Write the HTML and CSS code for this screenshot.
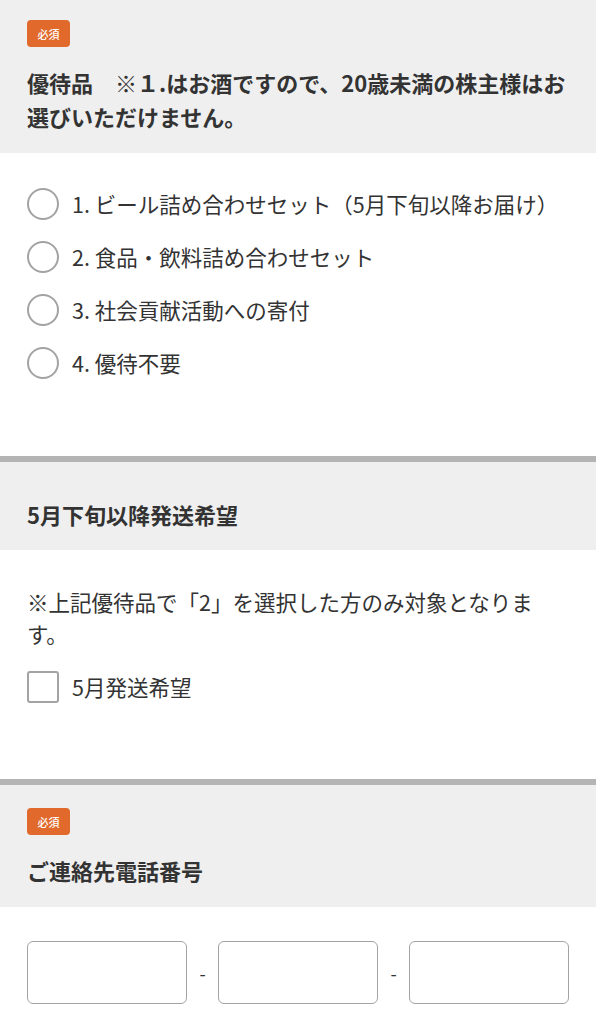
FILE: index.html
```html
<!DOCTYPE html>
<html lang="ja">
<head>
    <meta charset="UTF-8">
    <meta name="viewport" content="width=device-width, initial-scale=1.0">
    <title>株主優待 申込フォーム</title>
    <link rel="stylesheet" href="styles.css">
</head>
<body>
    <form class="form">
        <!-- 優待品 -->
        <section class="field field-first">
            <div class="field-head">
                <span class="badge">必須</span>
                <h2 class="field-title">優待品　※１.はお酒ですので、20歳未満の株主様はお選びいただけません。</h2>
            </div>
            <div class="field-body">
                <ul class="choices">
                    <li><label class="choice"><input type="radio" name="gift" value="1"><span>1. ビール詰め合わせセット（5月下旬以降お届け）</span></label></li>
                    <li><label class="choice"><input type="radio" name="gift" value="2"><span>2. 食品・飲料詰め合わせセット</span></label></li>
                    <li><label class="choice"><input type="radio" name="gift" value="3"><span>3. 社会貢献活動への寄付</span></label></li>
                    <li><label class="choice"><input type="radio" name="gift" value="4"><span>4. 優待不要</span></label></li>
                </ul>
            </div>
        </section>

        <!-- 発送希望 -->
        <section class="field">
            <div class="field-head field-head-plain">
                <h2 class="field-title">5月下旬以降発送希望</h2>
            </div>
            <div class="field-body">
                <p class="note">※上記優待品で「2」を選択した方のみ対象となります。</p>
                <label class="choice choice-check"><input type="checkbox" name="may"><span>5月発送希望</span></label>
            </div>
        </section>

        <!-- 電話番号 -->
        <section class="field">
            <div class="field-head">
                <span class="badge">必須</span>
                <h2 class="field-title">ご連絡先電話番号</h2>
            </div>
            <div class="field-body field-body-tel">
                <div class="tel">
                    <input type="tel" class="tel-input" aria-label="市外局番">
                    <span class="tel-sep">-</span>
                    <input type="tel" class="tel-input" aria-label="市内局番">
                    <span class="tel-sep">-</span>
                    <input type="tel" class="tel-input" aria-label="加入者番号">
                </div>
            </div>
        </section>
    </form>
</body>
</html>
```

FILE: styles.css
```css
:root {
    --text-color: #333;
    --head-bg: #efefef;
    --line-color: #b4b4b4;
    --badge-color: #e0692b;
    --control-border: #a3a3a3;
}

* {
    box-sizing: border-box;
    margin: 0;
    padding: 0;
}

body {
    font-family: 'Noto Sans CJK JP', 'Noto Sans', sans-serif;
    color: var(--text-color);
    background: #fff;
    font-size: 21.5px;
}

.field {
    border-top: 6px solid var(--line-color);
}

.field-first {
    border-top: none;
}

.field-head {
    display: flex;
    flex-direction: column;
    align-items: flex-start;
    background: var(--head-bg);
    padding: 23px 27px 20px;
}

.field-first .field-head {
    padding-top: 20px;
}

.field-head-plain {
    padding-top: 35px;
    padding-bottom: 19px;
}

.badge {
    display: flex;
    align-items: center;
    justify-content: center;
    width: 43px;
    height: 27px;
    margin-bottom: 18px;
    background: var(--badge-color);
    color: #fff;
    font-size: 11px;
    font-weight: 500;
    border-radius: 4px;
}

.field-title {
    font-size: 22px;
    font-weight: 700;
    line-height: 34px;
}

.field-body {
    padding: 36px 27px 76px;
}

.field-first .field-body {
    padding-top: 35px;
    padding-bottom: 77px;
}

.field-body-tel {
    padding-top: 34px;
    padding-bottom: 30px;
}

.choices {
    list-style: none;
    display: flex;
    flex-direction: column;
    gap: 21px;
}

.choice {
    display: flex;
    align-items: center;
    gap: 13px;
    line-height: 32px;
}

.choice input {
    appearance: none;
    -webkit-appearance: none;
    flex: none;
    width: 32px;
    height: 32px;
    border: 2.5px solid var(--control-border);
    border-radius: 50%;
    background: #fff;
}

.choice-check input {
    border-radius: 3px;
}

.note {
    line-height: 32px;
    margin-bottom: 21px;
}

.tel {
    display: flex;
    align-items: center;
}

.tel-input {
    flex: 1;
    min-width: 0;
    height: 63px;
    border: 1.5px solid var(--control-border);
    border-radius: 6px;
    background: #fff;
}

.tel-sep {
    width: 31px;
    text-align: center;
    font-size: 18px;
}
```
